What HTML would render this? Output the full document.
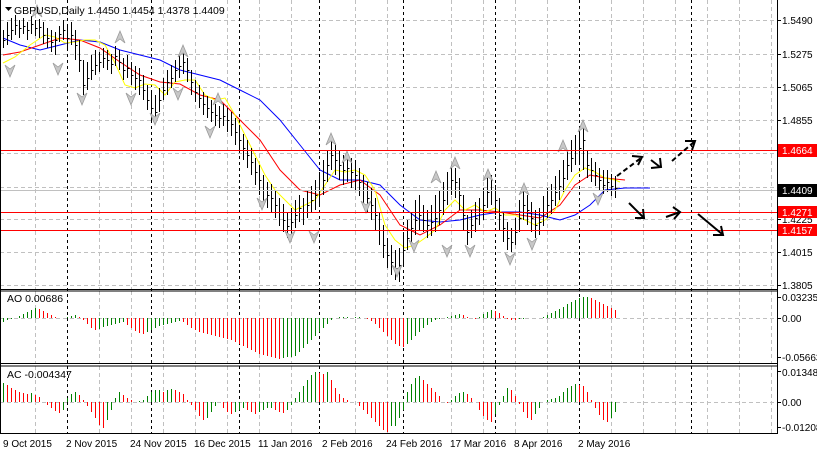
<!DOCTYPE html>
<html><head><meta charset="utf-8">
<style>
html,body{margin:0;padding:0;background:#fff;width:817px;height:455px;overflow:hidden}
svg{display:block;font-family:"Liberation Sans",sans-serif;font-size:10px}
</style></head>
<body>
<svg width="817" height="455" viewBox="0 0 817 455" xmlns="http://www.w3.org/2000/svg">
<defs>
<path id="fu" d="M-5 7 L0 -5 L5 7 L0 3 Z" fill="#c8c8c8" stroke="#9a9a9a" stroke-width="0.8"/>
<path id="fd" d="M-5 -7 L0 5 L5 -7 L0 -3 Z" fill="#c8c8c8" stroke="#9a9a9a" stroke-width="0.8"/>
</defs>
<rect width="817" height="455" fill="#fff"/>
<g stroke="#c0c0c0" stroke-dasharray="4,3">
<path d="M35.5 0V289M99.5 0V289M131.5 0V289M163.5 0V289M195.5 0V289M227.5 0V289M259.5 0V289M291.5 0V289M355.5 0V289M387.5 0V289M451.5 0V289M483.5 0V289M515.5 0V289M547.5 0V289M611.5 0V289M643.5 0V289M675.5 0V289M707.5 0V289M739.5 0V289M771.5 0V289"/>
<path d="M35.5 291V363M99.5 291V363M131.5 291V363M163.5 291V363M195.5 291V363M227.5 291V363M259.5 291V363M291.5 291V363M355.5 291V363M387.5 291V363M451.5 291V363M483.5 291V363M515.5 291V363M547.5 291V363M611.5 291V363M643.5 291V363M675.5 291V363M707.5 291V363M739.5 291V363M771.5 291V363"/>
<path d="M35.5 366V433M99.5 366V433M131.5 366V433M163.5 366V433M195.5 366V433M227.5 366V433M259.5 366V433M291.5 366V433M355.5 366V433M387.5 366V433M451.5 366V433M483.5 366V433M515.5 366V433M547.5 366V433M611.5 366V433M643.5 366V433M675.5 366V433M707.5 366V433M739.5 366V433M771.5 366V433"/>
<path d="M0 20.5H777M0 54.5H777M0 87.5H777M0 120.5H777M0 153.5H777M0 187.5H777M0 219.5H777M0 252.5H777M0 285.5H777M0 318.5H777M0 402.5H777"/>
</g>
<g stroke="#000" stroke-dasharray="3,3">
<path d="M67.5 0V434M151.5 0V434M239.5 0V434M319.5 0V434M403.5 0V434M495.5 0V434M579.5 0V434M691.5 0V434"/>
</g>
<!-- AO -->
<path stroke="#008000" stroke-width="1" fill="none" d="M3.5 318V322M7.5 318V320M11.5 318V319M15.5 318V318M19.5 318V316M23.5 318V314M27.5 318V312M31.5 318V310M35.5 318V308M67.5 318V317M71.5 318V316M75.5 318V315M99.5 318V329M103.5 318V327M107.5 318V326M111.5 318V325M115.5 318V324M119.5 318V323M123.5 318V322M147.5 318V332M151.5 318V330M155.5 318V328M159.5 318V326M163.5 318V325M167.5 318V324M171.5 318V323M175.5 318V322M179.5 318V321M283.5 318V358M287.5 318V357M291.5 318V357M295.5 318V356M299.5 318V352M303.5 318V348M307.5 318V344M311.5 318V340M315.5 318V336M319.5 318V332M323.5 318V328M327.5 318V324M331.5 318V320M335.5 318V318M339.5 318V317M343.5 318V317M347.5 318V317M355.5 318V317M359.5 318V317M407.5 318V344M411.5 318V340M415.5 318V336M419.5 318V332M423.5 318V328M427.5 318V325M431.5 318V322M435.5 318V320M439.5 318V319M443.5 318V318M447.5 318V317M451.5 318V316M455.5 318V315M459.5 318V314M479.5 318V317M483.5 318V314M487.5 318V312M491.5 318V310M519.5 318V319M523.5 318V319M527.5 318V318M543.5 318V317M547.5 318V315M551.5 318V313M555.5 318V311M559.5 318V309M563.5 318V307M567.5 318V304M571.5 318V302M575.5 318V300M579.5 318V298M583.5 318V297M587.5 318V297"/>
<path stroke="#ff0000" stroke-width="1" fill="none" d="M39.5 318V309M43.5 318V311M47.5 318V313M51.5 318V315M55.5 318V317M79.5 318V317M83.5 318V320M87.5 318V324M91.5 318V328M95.5 318V330M127.5 318V325M131.5 318V328M135.5 318V331M139.5 318V333M143.5 318V334M183.5 318V322M187.5 318V325M191.5 318V328M195.5 318V330M199.5 318V332M203.5 318V333M207.5 318V334M211.5 318V335M215.5 318V336M219.5 318V337M223.5 318V338M227.5 318V339M231.5 318V340M235.5 318V342M239.5 318V344M243.5 318V346M247.5 318V348M251.5 318V350M255.5 318V352M259.5 318V354M263.5 318V355M267.5 318V356M271.5 318V357M275.5 318V358M279.5 318V359M351.5 318V318M363.5 318V318M367.5 318V319M371.5 318V321M375.5 318V324M379.5 318V328M383.5 318V332M387.5 318V336M391.5 318V340M395.5 318V344M399.5 318V346M403.5 318V347M463.5 318V315M467.5 318V317M471.5 318V318M475.5 318V319M495.5 318V311M499.5 318V313M503.5 318V316M507.5 318V319M511.5 318V320M515.5 318V320M591.5 318V298M595.5 318V300M599.5 318V302M603.5 318V304M607.5 318V306M611.5 318V308M615.5 318V310"/>
<!-- AC -->
<path stroke="#008000" stroke-width="1" fill="none" d="M3.5 402V383M31.5 402V393M63.5 402V410M67.5 402V398M71.5 402V394M75.5 402V392M107.5 402V420M111.5 402V410M115.5 402V398M119.5 402V392M139.5 402V401M143.5 402V400M147.5 402V396M151.5 402V392M155.5 402V390M159.5 402V390M167.5 402V390M171.5 402V389M207.5 402V418M211.5 402V412M215.5 402V406M219.5 402V402M235.5 402V412M239.5 402V410M243.5 402V408M259.5 402V412M263.5 402V410M267.5 402V408M271.5 402V408M287.5 402V410M291.5 402V405M295.5 402V398M299.5 402V392M303.5 402V386M307.5 402V380M311.5 402V375M315.5 402V372M327.5 402V372M391.5 402V426M395.5 402V426M399.5 402V418M403.5 402V410M407.5 402V392M411.5 402V384M415.5 402V378M419.5 402V376M451.5 402V400M455.5 402V396M459.5 402V393M463.5 402V392M495.5 402V414M499.5 402V405M503.5 402V396M507.5 402V388M535.5 402V414M539.5 402V408M543.5 402V402M547.5 402V400M551.5 402V399M555.5 402V398M559.5 402V396M563.5 402V392M567.5 402V388M571.5 402V386M575.5 402V384M611.5 402V418M615.5 402V412"/>
<path stroke="#ff0000" stroke-width="1" fill="none" d="M7.5 402V385M11.5 402V388M15.5 402V390M19.5 402V392M23.5 402V393M27.5 402V394M35.5 402V395M39.5 402V397M43.5 402V402M47.5 402V405M51.5 402V408M55.5 402V411M59.5 402V413M79.5 402V395M83.5 402V400M87.5 402V406M91.5 402V412M95.5 402V418M99.5 402V425M103.5 402V428M123.5 402V395M127.5 402V398M131.5 402V400M135.5 402V402M163.5 402V392M175.5 402V390M179.5 402V392M183.5 402V394M187.5 402V400M191.5 402V405M195.5 402V410M199.5 402V416M203.5 402V420M223.5 402V408M227.5 402V412M231.5 402V414M247.5 402V410M251.5 402V412M255.5 402V414M275.5 402V410M279.5 402V412M283.5 402V413M319.5 402V373M323.5 402V374M331.5 402V380M335.5 402V388M339.5 402V394M343.5 402V398M347.5 402V400M351.5 402V402M359.5 402V406M363.5 402V410M367.5 402V414M371.5 402V418M375.5 402V422M379.5 402V426M383.5 402V430M387.5 402V432M423.5 402V380M427.5 402V384M431.5 402V388M435.5 402V392M439.5 402V396M447.5 402V403M467.5 402V394M471.5 402V398M479.5 402V410M483.5 402V416M487.5 402V420M491.5 402V422M511.5 402V390M515.5 402V396M519.5 402V404M523.5 402V412M527.5 402V418M531.5 402V420M579.5 402V385M583.5 402V386M587.5 402V392M591.5 402V400M595.5 402V408M599.5 402V415M603.5 402V420M607.5 402V422"/>
<!-- moving averages -->
<polyline fill="none" stroke="#0000ff" points="3,38 20,45 40,50 60,45 80,40 100,42 120,50 140,55 160,60 180,70 200,75 220,80 240,90 260,100 280,120 300,145 320,170 340,180 360,180 380,185 400,205 420,220 440,222 460,220 480,215 500,212 520,212 540,215 560,220 575,215 590,205 605,190 625,188 650,188"/>
<polyline fill="none" stroke="#ff0000" points="3,55 20,52 40,45 60,38 80,40 100,48 120,62 140,75 160,82 180,84 200,95 220,100 240,120 260,140 280,170 300,190 320,195 340,185 360,180 380,195 400,225 420,235 440,225 460,210 480,210 500,212 520,215 540,218 560,205 575,185 590,175 605,178 625,180"/>
<polyline fill="none" stroke="#ffff00" points="3,63 15,57 30,45 45,35 55,37 65,43 75,42 85,40 95,40 105,45 115,63 125,85 135,88 145,84 155,85 165,95 175,82 185,80 195,80 205,95 215,100 225,98 235,115 245,135 255,155 265,175 275,190 285,200 295,210 305,205 315,200 325,185 335,170 345,172 355,170 365,175 375,190 385,225 395,240 405,248 415,245 425,238 435,230 445,210 455,200 465,210 475,205 485,212 495,208 505,215 515,215 525,220 535,225 545,220 555,210 565,190 575,175 585,168 595,172 605,178 615,180 620,182"/>
<!-- bars -->
<path stroke="#000" fill="none" d="M3.5 30V48M3.5 40.5h2M7.5 22V45M7.5 35.5h2M11.5 18V40M11.5 30.5h2M15.5 15V35M15.5 25.5h2M19.5 20V38M19.5 28.5h2M23.5 18V34M23.5 26.5h2M27.5 22V40M27.5 30.5h2M31.5 16V34M31.5 24.5h2M35.5 20V36M35.5 28.5h2M39.5 19V38M39.5 27.5h2M43.5 22V44M43.5 35.5h2M47.5 28V48M47.5 38.5h2M51.5 30V52M51.5 42.5h2M55.5 32V55M55.5 40.5h2M59.5 26V42M59.5 34.5h2M63.5 20V40M63.5 30.5h2M67.5 26V50M67.5 38.5h2M71.5 22V45M71.5 35.5h2M75.5 30V60M75.5 45.5h2M79.5 40V72M79.5 60.5h2M83.5 60V95M83.5 85.5h2M87.5 62V90M87.5 78.5h2M91.5 55V80M91.5 70.5h2M95.5 50V75M95.5 65.5h2M99.5 52V72M99.5 62.5h2M103.5 48V68M103.5 58.5h2M107.5 50V70M107.5 60.5h2M111.5 54V74M111.5 64.5h2M115.5 46V66M115.5 56.5h2M119.5 50V70M119.5 62.5h2M123.5 58V80M123.5 70.5h2M127.5 55V78M127.5 68.5h2M131.5 62V85M131.5 75.5h2M135.5 66V90M135.5 78.5h2M139.5 68V95M139.5 80.5h2M143.5 75V100M143.5 90.5h2M147.5 85V110M147.5 100.5h2M151.5 92V120M151.5 108.5h2M155.5 95V122M155.5 112.5h2M159.5 88V112M159.5 100.5h2M163.5 78V100M163.5 90.5h2M167.5 70V95M167.5 82.5h2M171.5 65V88M171.5 78.5h2M175.5 60V82M175.5 70.5h2M179.5 55V78M179.5 66.5h2M183.5 50V74M183.5 62.5h2M187.5 58V82M187.5 70.5h2M191.5 70V95M191.5 82.5h2M195.5 80V102M195.5 92.5h2M199.5 85V108M199.5 98.5h2M203.5 92V115M203.5 104.5h2M207.5 96V118M207.5 108.5h2M211.5 100V122M211.5 112.5h2M215.5 104V126M215.5 115.5h2M219.5 106V128M219.5 118.5h2M223.5 104V126M223.5 116.5h2M227.5 108V132M227.5 120.5h2M231.5 112V136M231.5 124.5h2M235.5 118V145M235.5 132.5h2M239.5 125V152M239.5 140.5h2M243.5 134V160M243.5 148.5h2M247.5 140V168M247.5 155.5h2M251.5 148V175M251.5 162.5h2M255.5 158V185M255.5 172.5h2M259.5 165V195M259.5 180.5h2M263.5 175V202M263.5 190.5h2M267.5 182V208M267.5 195.5h2M271.5 184V212M271.5 198.5h2M275.5 190V218M275.5 205.5h2M279.5 198V226M279.5 212.5h2M283.5 204V232M283.5 220.5h2M287.5 212V238M287.5 226.5h2M291.5 208V236M291.5 222.5h2M295.5 200V228M295.5 215.5h2M299.5 195V222M299.5 208.5h2M303.5 198V225M303.5 212.5h2M307.5 190V218M307.5 205.5h2M311.5 186V212M311.5 200.5h2M315.5 180V210M315.5 195.5h2M319.5 172V205M319.5 190.5h2M323.5 160V195M323.5 180.5h2M327.5 150V182M327.5 165.5h2M331.5 140V170M331.5 155.5h2M335.5 145V175M335.5 160.5h2M339.5 150V180M339.5 165.5h2M343.5 155V185M343.5 170.5h2M347.5 152V182M347.5 168.5h2M351.5 158V188M351.5 172.5h2M355.5 160V190M355.5 175.5h2M359.5 168V196M359.5 182.5h2M363.5 175V205M363.5 190.5h2M367.5 182V212M367.5 198.5h2M371.5 188V220M371.5 205.5h2M375.5 198V230M375.5 215.5h2M379.5 212V245M379.5 230.5h2M383.5 225V258M383.5 245.5h2M387.5 238V268M387.5 255.5h2M391.5 245V275M391.5 262.5h2M395.5 250V280M395.5 268.5h2M399.5 248V282M399.5 265.5h2M403.5 232V265M403.5 250.5h2M407.5 220V250M407.5 238.5h2M411.5 212V242M411.5 228.5h2M415.5 200V235M415.5 220.5h2M419.5 195V230M419.5 215.5h2M423.5 205V232M423.5 220.5h2M427.5 210V238M427.5 225.5h2M431.5 205V236M431.5 222.5h2M435.5 195V232M435.5 218.5h2M439.5 190V225M439.5 210.5h2M443.5 182V215M443.5 200.5h2M447.5 172V205M447.5 190.5h2M451.5 165V195M451.5 180.5h2M455.5 168V198M455.5 182.5h2M459.5 178V210M459.5 195.5h2M463.5 195V230M463.5 215.5h2M467.5 215V245M467.5 232.5h2M471.5 210V238M471.5 225.5h2M475.5 202V232M475.5 218.5h2M479.5 198V225M479.5 212.5h2M483.5 188V220M483.5 205.5h2M487.5 178V208M487.5 192.5h2M491.5 175V205M491.5 190.5h2M495.5 185V215M495.5 200.5h2M499.5 198V230M499.5 215.5h2M503.5 212V242M503.5 228.5h2M507.5 222V250M507.5 238.5h2M511.5 228V252M511.5 242.5h2M515.5 218V245M515.5 232.5h2M519.5 200V232M519.5 218.5h2M523.5 188V220M523.5 205.5h2M527.5 195V225M527.5 210.5h2M531.5 202V232M531.5 218.5h2M535.5 210V238M535.5 225.5h2M539.5 208V235M539.5 222.5h2M543.5 196V226M543.5 212.5h2M547.5 188V218M547.5 205.5h2M551.5 184V214M551.5 200.5h2M555.5 176V206M555.5 192.5h2M559.5 170V200M559.5 186.5h2M563.5 160V192M563.5 178.5h2M567.5 150V180M567.5 165.5h2M571.5 140V172M571.5 158.5h2M575.5 135V165M575.5 150.5h2M579.5 128V162M579.5 148.5h2M583.5 122V170M583.5 140.5h2M587.5 150V178M587.5 165.5h2M591.5 158V182M591.5 170.5h2M595.5 162V186M595.5 175.5h2M599.5 168V190M599.5 180.5h2M603.5 170V194M603.5 185.5h2M607.5 170V192M607.5 182.5h2M611.5 174V196M611.5 186.5h2M615.5 176V198M615.5 188.5h2"/>
<!-- fractals -->
<use href="#fu" x="37" y="10"/><use href="#fu" x="120" y="36"/><use href="#fu" x="183" y="50"/><use href="#fu" x="218" y="98"/>
<use href="#fu" x="331" y="138"/><use href="#fu" x="347" y="156"/><use href="#fu" x="436" y="176"/><use href="#fu" x="455" y="162"/>
<use href="#fu" x="488" y="174"/><use href="#fu" x="524" y="188"/><use href="#fu" x="563" y="145"/><use href="#fu" x="583" y="125"/>
<use href="#fd" x="10" y="72"/><use href="#fd" x="58" y="70"/><use href="#fd" x="82" y="100"/><use href="#fd" x="131" y="100"/>
<use href="#fd" x="155" y="120"/><use href="#fd" x="178" y="95"/><use href="#fd" x="210" y="133"/><use href="#fd" x="262" y="205"/>
<use href="#fd" x="290" y="238"/><use href="#fd" x="314" y="238"/><use href="#fd" x="366" y="208"/><use href="#fd" x="397" y="272"/>
<use href="#fd" x="414" y="247"/><use href="#fd" x="447" y="252"/><use href="#fd" x="470" y="252"/><use href="#fd" x="510" y="260"/>
<use href="#fd" x="532" y="245"/><use href="#fd" x="598" y="200"/>
<!-- horizontal levels -->
<line x1="0" y1="190.5" x2="777" y2="190.5" stroke="#c0c0c0"/>
<line x1="0" y1="150.5" x2="777" y2="150.5" stroke="#ff0000"/>
<line x1="0" y1="212.5" x2="777" y2="212.5" stroke="#ff0000"/>
<line x1="0" y1="230.5" x2="777" y2="230.5" stroke="#ff0000"/>
<!-- arrows -->
<g stroke="#000" stroke-width="2" fill="none">
<path d="M617 176 L641 158" stroke-dasharray="5,3"/><path d="M632 156 L642 157 L638 165"/>
<path d="M651 160 L660 167"/><path d="M651 168 L661 167 L660 158"/>
<path d="M672 161 L694 142" stroke-dasharray="5,3"/><path d="M685 141 L695 141 L692 150"/>
<path d="M629 203 L643 217"/><path d="M635 218 L644 218 L643 209"/>
<path d="M666 217 L680 212"/><path d="M673 207 L680 212 L674 219"/>
<path d="M698 214 L722 234"/><path d="M713 235 L723 235 L721 226"/>
</g>
<!-- frames -->
<g stroke="#000" fill="none">
<line x1="0.5" y1="0" x2="0.5" y2="434"/>
<line x1="777.5" y1="0" x2="777.5" y2="434"/>
<line x1="0" y1="289.5" x2="778" y2="289.5"/><line x1="0" y1="291" x2="778" y2="291"/>
<line x1="0" y1="363.5" x2="778" y2="363.5"/><line x1="0" y1="366" x2="778" y2="366"/>
<line x1="0" y1="433.5" x2="778" y2="433.5"/>
<path d="M777 20.5h4M777 54.5h4M777 87.5h4M777 120.5h4M777 153.5h4M777 187.5h4M777 219.5h4M777 252.5h4M777 285.5h4M777 297.5h4M777 318.5h4M777 357.5h4M777 371.5h4M777 402.5h4M777 427.5h4"/>
</g>
<!-- title -->
<path d="M5 7 L12 7 L8.5 11 Z" fill="#000"/>
<text x="14" y="14" font-size="10.5">GBPUSD,Daily  1.4450 1.4454 1.4378 1.4409</text>
<text x="7" y="302" font-size="10.5">AO 0.00686</text>
<text x="7" y="378" font-size="10.5">AC -0.004347</text>
<!-- price axis -->
<g font-size="10" fill="#000">
<text x="782" y="24">1.5490</text>
<text x="782" y="58">1.5275</text>
<text x="782" y="91">1.5065</text>
<text x="782" y="124">1.4855</text>
<text x="782" y="157">1.4645</text>
<text x="782" y="223">1.4225</text>
<text x="782" y="256">1.4015</text>
<text x="782" y="289">1.3805</text>
<text x="782" y="301">0.03235</text>
<text x="782" y="322">0.00</text>
<text x="782" y="361">-0.05663</text>
<text x="782" y="376">0.013481</text>
<text x="782" y="406">0.00</text>
<text x="782" y="431">-0.01208</text>
</g>
<rect x="778" y="144" width="39" height="13" fill="#ff0000"/><text x="782" y="154" fill="#fff">1.4664</text>
<rect x="778" y="184" width="39" height="13" fill="#000"/><text x="782" y="194" fill="#fff">1.4409</text>
<rect x="778" y="206" width="39" height="12" fill="#ff0000"/><text x="782" y="216" fill="#fff">1.4271</text>
<rect x="778" y="224" width="39" height="12" fill="#ff0000"/><text x="782" y="234" fill="#fff">1.4157</text>
<!-- dates -->
<g font-size="10" fill="#000">
<text x="3" y="447">9 Oct 2015</text>
<text x="66" y="447">2 Nov 2015</text>
<text x="130" y="447">24 Nov 2015</text>
<text x="194" y="447">16 Dec 2015</text>
<text x="258" y="447">11 Jan 2016</text>
<text x="322" y="447">2 Feb 2016</text>
<text x="386" y="447">24 Feb 2016</text>
<text x="450" y="447">17 Mar 2016</text>
<text x="514" y="447">8 Apr 2016</text>
<text x="578" y="447">2 May 2016</text>
</g>
</svg>
</body></html>
